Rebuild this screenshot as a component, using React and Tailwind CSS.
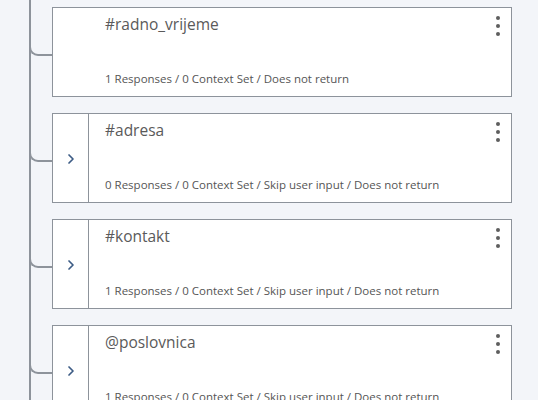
import React from "react";

const nodes = [
  { title: "#radno_vrijeme", meta: "1 Responses / 0 Context Set / Does not return", expand: false },
  { title: "#adresa", meta: "0 Responses / 0 Context Set / Skip user input / Does not return", expand: true },
  { title: "#kontakt", meta: "1 Responses / 0 Context Set / Skip user input / Does not return", expand: true },
  { title: "@poslovnica", meta: "1 Responses / 0 Context Set / Skip user input / Does not return", expand: true },
];

const Chevron = () => (
  <svg width="10" height="12" viewBox="0 0 10 12" fill="none">
    <path d="M3 2l4 4-4 4" stroke="#3d5c85" strokeWidth="1.7" strokeLinecap="round" strokeLinejoin="round" />
  </svg>
);

const Kebab = () => (
  <div className="flex flex-col gap-[4px] pt-[8px] pr-[11px]">
    <span className="w-[4px] h-[4px] rounded-full bg-[#5e5e5e]"></span>
    <span className="w-[4px] h-[4px] rounded-full bg-[#5e5e5e]"></span>
    <span className="w-[4px] h-[4px] rounded-full bg-[#5e5e5e]"></span>
  </div>
);

const NodeCard = ({ node }) => (
  <div className="flex">
    {/* connector from the trunk */}
    <div className="w-[21px] shrink-0">
      <div className="-ml-[2px] mt-[33px] h-[16px] w-[23px] border-l-2 border-b-2 border-[#8d939b] rounded-bl-[9px]"></div>
    </div>

    <div className="w-[460px] h-[90px] shrink-0 bg-white border border-[#8d939b] flex">
      <div
        className={`w-[36px] shrink-0 flex items-center justify-center pt-[2px] ${
          node.expand ? "border-r border-[#8d939b]" : ""
        }`}
      >
        {node.expand && <Chevron />}
      </div>

      <div className="flex-1 flex flex-col justify-between pl-[16px] pt-[6px] pb-[9px]">
        <div className="text-[15.5px] leading-[20px] text-[#5a5a5a]">{node.title}</div>
        <div className="text-[11.5px] leading-[16px] text-[#555555]">{node.meta}</div>
      </div>

      <Kebab />
    </div>
  </div>
);

export default function App() {
  return (
    <div
      className="h-[400px] overflow-hidden bg-[#f3f5f9]"
      style={{ fontFamily: '"Open Sans", "Noto Sans", sans-serif' }}
    >
      <div className="ml-[29px] min-h-[420px] border-l-2 border-[#8d939b] pt-[7px] flex flex-col gap-[16px]">
        {nodes.map((node, i) => (
          <NodeCard key={i} node={node} />
        ))}
      </div>
    </div>
  );
}
